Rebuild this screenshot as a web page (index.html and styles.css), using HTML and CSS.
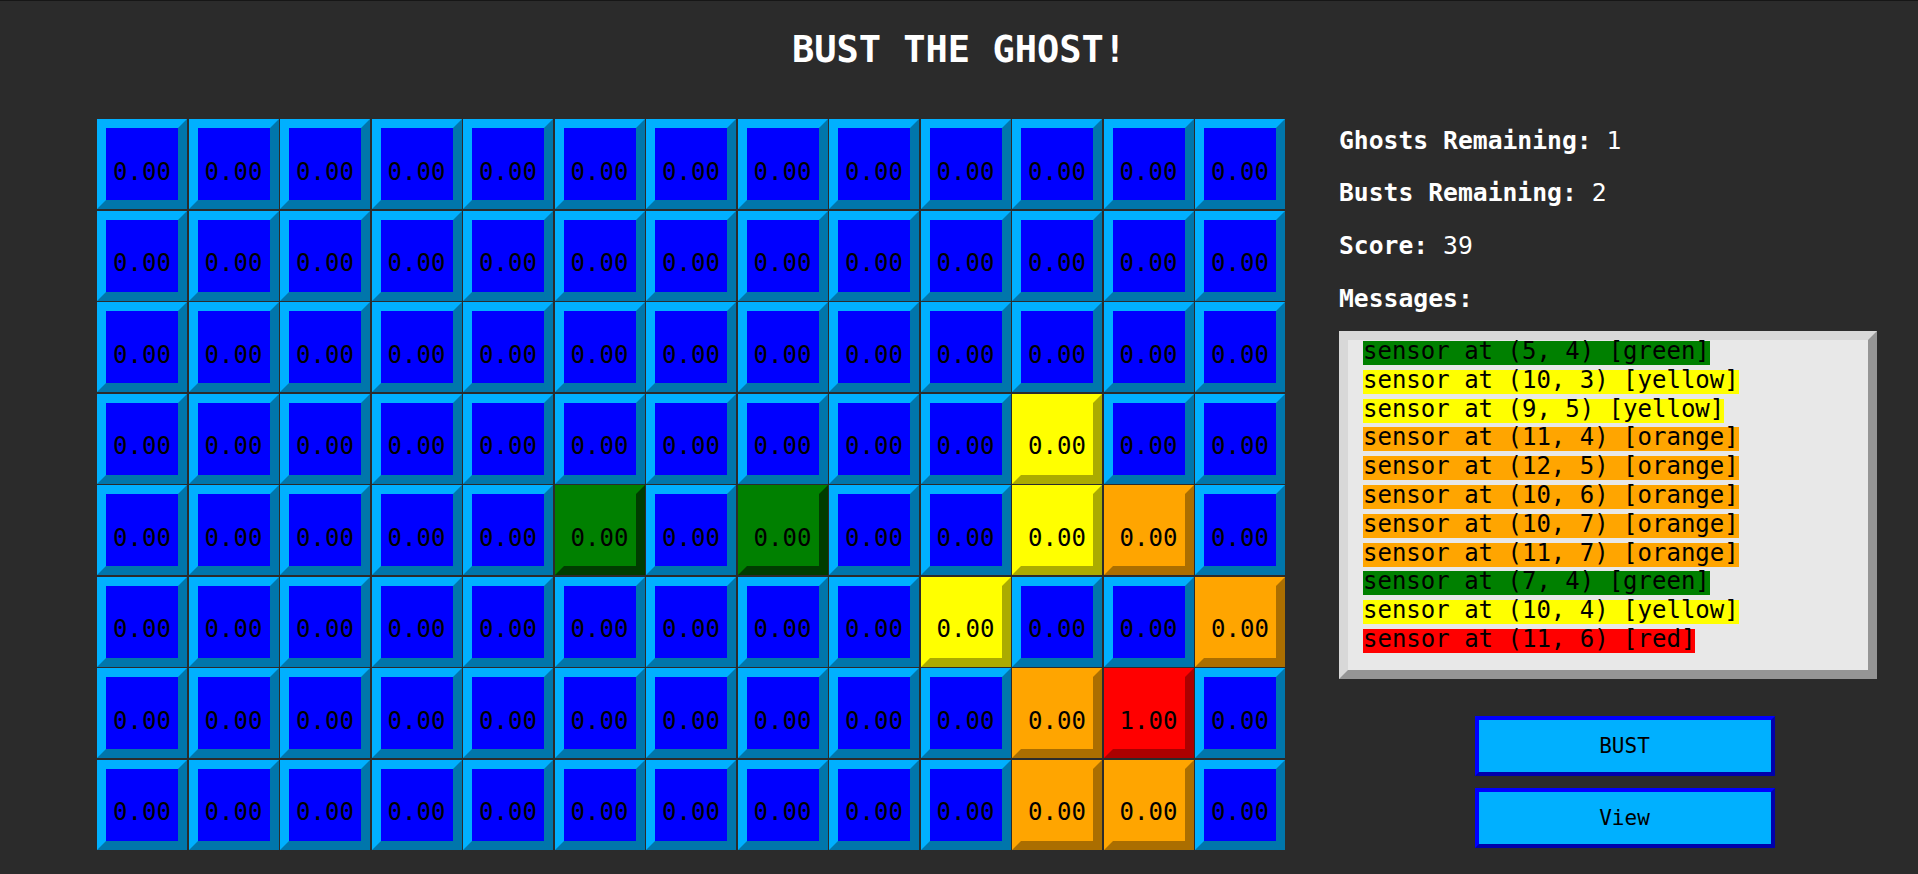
FILE: index.html
```html
<!DOCTYPE html>
<html lang="en">
<head>
<meta charset="utf-8">
<title>Bust the Ghost!</title>
<link rel="stylesheet" href="styles.css">
</head>
<body>
<div class="page">
  <h1 class="title">BUST THE GHOST!</h1>
  <div class="main">
    <div class="board" id="board"></div>
    <aside class="panel">
      <div class="stats">
        <p class="stat"><b>Ghosts Remaining:</b> 1</p>
        <p class="stat"><b>Busts Remaining:</b> 2</p>
        <p class="stat"><b>Score:</b> 39</p>
        <p class="stat"><b>Messages:</b></p>
      </div>
      <div class="messages">
        <span class="msg green">sensor at (5, 4) [green]</span>
        <span class="msg yellow">sensor at (10, 3) [yellow]</span>
        <span class="msg yellow">sensor at (9, 5) [yellow]</span>
        <span class="msg orange">sensor at (11, 4) [orange]</span>
        <span class="msg orange">sensor at (12, 5) [orange]</span>
        <span class="msg orange">sensor at (10, 6) [orange]</span>
        <span class="msg orange">sensor at (10, 7) [orange]</span>
        <span class="msg orange">sensor at (11, 7) [orange]</span>
        <span class="msg green">sensor at (7, 4) [green]</span>
        <span class="msg yellow">sensor at (10, 4) [yellow]</span>
        <span class="msg red">sensor at (11, 6) [red]</span>
      </div>
      <div class="actions">
        <button class="btn">BUST</button>
        <button class="btn">View</button>
      </div>
    </aside>
  </div>
</div>
<script src="app.js"></script>
</body>
</html>
```
FILE: app.js
```js
(function () {
  var cols = 13, rows = 8;
  var colored = {
    "10,3": ["yellow", "0.00"],
    "5,4": ["green", "0.00"],
    "7,4": ["green", "0.00"],
    "10,4": ["yellow", "0.00"],
    "11,4": ["orange", "0.00"],
    "9,5": ["yellow", "0.00"],
    "12,5": ["orange", "0.00"],
    "10,6": ["orange", "0.00"],
    "11,6": ["red", "1.00"],
    "10,7": ["orange", "0.00"],
    "11,7": ["orange", "0.00"]
  };
  var board = document.getElementById("board");
  for (var y = 0; y < rows; y++) {
    for (var x = 0; x < cols; x++) {
      var d = document.createElement("div");
      var c = colored[x + "," + y];
      d.className = "cell" + (c ? " " + c[0] : "");
      d.textContent = c ? c[1] : "0.00";
      board.appendChild(d);
    }
  }
})();
```
FILE: styles.css
```css
html, body {
  margin: 0;
  padding: 0;
  background: #2b2b2b;
}

.page {
  border-top: 1px solid #161616;
  min-height: 873px;
  box-sizing: border-box;
  font-family: "DejaVu Sans Mono", monospace;
}

.title {
  margin: 0;
  padding: 27px 0 47px;
  font-size: 37px;
  line-height: 44px;
  font-weight: bold;
  color: #ffffff;
  text-align: center;
}

.main {
  display: flex;
  padding-left: 97px;
  gap: 54px;
}

.board {
  display: grid;
  grid-template-columns: repeat(13, 90px);
  grid-auto-rows: 90px;
  gap: 1.5px;
  width: 1188px;
  flex: none;
}

.cell {
  box-sizing: border-box;
  border: 9px solid;
  border-color: #00b0ff #0076ab #0076ab #00b0ff;
  background: #0000ff;
  color: #000;
  font-size: 24px;
  display: flex;
  align-items: center;
  justify-content: center;
  padding-top: 15px;
}

.cell.yellow { background: #ffff00; border-color: #ffff00 #abab00 #abab00 #ffff00; }
.cell.orange { background: #ffa500; border-color: #ffa500 #ab6e00 #ab6e00 #ffa500; }
.cell.red { background: #ff0000; border-color: #ff0000 #ab0000 #ab0000 #ff0000; }
.cell.green { background: #008000; border-color: #008000 #003c00 #003c00 #008000; }

.panel {
  width: 571px;
  flex: none;
  padding-top: 7.75px;
  display: flex;
  flex-direction: column;
}

.stats {
  display: flex;
  flex-direction: column;
  gap: 24.7px;
}

.stat {
  margin: 0;
  color: #ffffff;
  font-size: 24.7px;
  line-height: 28px;
  white-space: pre;
}

.stat b {
  font-weight: bold;
}

.messages {
  margin-top: 18.15px;
  width: 538px;
  height: 348px;
  box-sizing: border-box;
  border: 9px solid;
  border-color: #d8d8d8 #959595 #959595 #d8d8d8;
  background: #e8e8e8;
  padding: 1px 0 0 15px;
  display: flex;
  flex-direction: column;
  align-items: flex-start;
  gap: 4.8px;
}

.msg {
  display: block;
  height: 24px;
  line-height: 21.4px;
  font-size: 24px;
  color: #000;
  white-space: pre;
}

.msg.green { background: #008000; }
.msg.yellow { background: #ffff00; }
.msg.orange { background: #ffa500; }
.msg.red { background: #ff0000; }

.actions {
  margin-top: 37px;
  display: flex;
  flex-direction: column;
  align-items: center;
  gap: 12px;
}

.btn {
  width: 300px;
  height: 60px;
  box-sizing: border-box;
  border: 4px solid;
  border-color: #0000ff #0000ab #0000ab #0000ff;
  background: #00b0ff;
  color: #000;
  font-family: "DejaVu Sans Mono", monospace;
  font-size: 21px;
  padding: 0;
  cursor: pointer;
}
```
